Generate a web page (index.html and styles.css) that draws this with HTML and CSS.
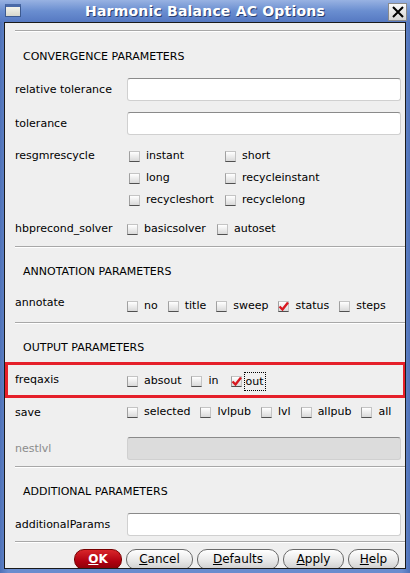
FILE: index.html
```html
<!DOCTYPE html>
<html>
<head>
<meta charset="utf-8">
<link rel="stylesheet" href="styles.css">
</head>
<body>
<div class="window">
  <div class="titlebar">
    <span class="winicon"></span>
    <span class="title">Harmonic Balance AC Options</span>
    <span class="closebtn">
      <svg width="14" height="14" viewBox="0 0 14 14"><path d="M2 2 L12 12 M12 2 L2 12" stroke="#000" stroke-width="2" fill="none"/></svg>
    </span>
  </div>
  <div class="content">
    <div class="sep s1"></div>
    <div class="heading h-first">CONVERGENCE PARAMETERS</div>

    <div class="row r-input m11a">
      <div class="label">relative tolerance</div>
      <div class="input"></div>
    </div>
    <div class="row r-input m11">
      <div class="label">tolerance</div>
      <div class="input"></div>
    </div>
    <div class="row m10">
      <div class="label lh22">resgmrescycle</div>
      <div class="grid2">
        <label class="cb"><span class="box"></span>instant</label>
        <label class="cb"><span class="box"></span>short</label>
        <label class="cb"><span class="box"></span>long</label>
        <label class="cb"><span class="box"></span>recycleinstant</label>
        <label class="cb"><span class="box"></span>recycleshort</label>
        <label class="cb"><span class="box"></span>recyclelong</label>
      </div>
    </div>
    <div class="row m7">
      <div class="label lh22">hbprecond_solver</div>
      <div class="grid2b">
        <label class="cb"><span class="box"></span>basicsolver</label>
        <label class="cb"><span class="box"></span>autoset</label>
      </div>
    </div>

    <div class="sep m6"></div>
    <div class="heading">ANNOTATION PARAMETERS</div>
    <div class="row r-annot">
      <div class="label lh20">annotate</div>
      <div class="checks pt3">
        <label class="cb"><span class="box"></span>no</label>
        <label class="cb"><span class="box"></span>title</label>
        <label class="cb"><span class="box"></span>sweep</label>
        <label class="cb"><span class="box checked"><svg width="11" height="11" viewBox="0 0 11 11"><path d="M1.5 5.5 L4.5 8.5 L10 1.5" stroke="#d81820" stroke-width="2.4" fill="none"/></svg></span>status</label>
        <label class="cb"><span class="box"></span>steps</label>
      </div>
    </div>

    <div class="sep m7"></div>
    <div class="heading">OUTPUT PARAMETERS</div>
    <div class="highlight">
      <div class="row hl-row">
        <div class="label lh20 hl-label">freqaxis</div>
        <div class="checks pt2">
          <label class="cb"><span class="box"></span>absout</label>
          <label class="cb"><span class="box"></span>in</label>
          <label class="cb cb-out"><span class="box checked"><svg width="11" height="11" viewBox="0 0 11 11"><path d="M1.5 5.5 L4.5 8.5 L10 1.5" stroke="#d81820" stroke-width="2.4" fill="none"/></svg></span><span class="focus">out</span></label>
        </div>
      </div>
    </div>
    <div class="row m4">
      <div class="label lh22">save</div>
      <div class="checks lh22">
        <label class="cb"><span class="box"></span>selected</label>
        <label class="cb"><span class="box"></span>lvlpub</label>
        <label class="cb"><span class="box"></span>lvl</label>
        <label class="cb"><span class="box"></span>allpub</label>
        <label class="cb"><span class="box"></span>all</label>
      </div>
    </div>
    <div class="row r-input m13">
      <div class="label disabled">nestlvl</div>
      <div class="input dis"></div>
    </div>

    <div class="sep m6"></div>
    <div class="heading">ADDITIONAL PARAMETERS</div>
    <div class="row r-input m11a">
      <div class="label">additionalParams</div>
      <div class="input"></div>
    </div>

    <div class="sep m5"></div>
    <div class="buttons">
      <span class="btn ok"><u>O</u>K</span>
      <span class="btn cancel"><u>C</u>ancel</span>
      <span class="btn defaults"><u>D</u>efaults</span>
      <span class="btn apply"><u>A</u>pply</span>
      <span class="btn help"><u>H</u>elp</span>
    </div>
  </div>
</div>
</body>
</html>
```

FILE: styles.css
```css
* { box-sizing: border-box; }
html, body { margin: 0; padding: 0; }
body {
  width: 410px;
  height: 573px;
  overflow: hidden;
  font-family: "DejaVu Sans", sans-serif;
  font-size: 11px;
  color: #000;
}
.window {
  width: 410px;
  height: 573px;
  background: linear-gradient(90deg, #4f72b8, #6a8cce 2%, #6a8cce 98%, #4f72b8);
  padding: 0 4px 4px 4px;
  display: flex;
  flex-direction: column;
}
.titlebar {
  height: 22px;
  margin: 0 -4px;
  background: linear-gradient(#98b2e2, #6a8ed0 50%, #5679c2);
  position: relative;
  display: flex;
  align-items: center;
  justify-content: center;
  flex: none;
}
.title {
  color: #fff;
  font-weight: bold;
  font-size: 14px;
  letter-spacing: 0.2px;
  text-shadow: 1px 1px 0 #2a3f70;
}
.winicon {
  position: absolute;
  left: 5px;
  top: 4px;
  width: 16px;
  height: 13px;
  border: 1px solid #3d5a90;
  border-top: 3px solid #4a6aa8;
  background: linear-gradient(#f4f4ec, #d8d8cc);
}
.closebtn {
  position: absolute;
  right: 3px;
  top: 3px;
  width: 19px;
  height: 18px;
  background: linear-gradient(#fafafa, #d4d4d4);
  border: 1px solid #8a8a8a;
  display: flex;
  align-items: center;
  justify-content: center;
}
.content {
  flex: 1;
  background: #efefef;
  border: 1px solid #1a1a1a;
  display: flex;
  flex-direction: column;
  overflow: hidden;
}
.sep {
  height: 2px;
  margin-left: 10px;
  border-top: 1px solid #a8a8a8;
  border-bottom: 1px solid #ffffff;
  flex: none;
}
.s1 { margin-top: 7px; }
.m4 { margin-top: 4px; }
.m5 { margin-top: 5px; }
.m6 { margin-top: 6px; }
.m7 { margin-top: 7px; }
.m10 { margin-top: 10px; }
.m11 { margin-top: 11px; }
.m11a { margin-top: 11px; }
.m13 { margin-top: 13px; }
.heading {
  margin-top: 14px;
  height: 20px;
  line-height: 20px;
  padding-left: 18px;
  flex: none;
}
.h-first { margin-top: 15px; }
.row {
  display: grid;
  grid-template-columns: 112px 1fr;
  padding-left: 10px;
  padding-right: 4px;
  align-items: start;
  flex: none;
}
.r-input {
  align-items: center;
  height: 23px;
}
.label { white-space: nowrap; }
.lh22 { line-height: 22px; }
.lh20 { line-height: 20px; }
.disabled { color: #8c8c8c; }
.input {
  height: 23px;
  background: #fff;
  border: 1px solid #d0d0d0;
  border-top-color: #8a8a8a;
  border-radius: 3px;
}
.input.dis { background: #dcdcdc; }
.grid2 {
  display: grid;
  grid-template-columns: 96px auto;
  padding-left: 2px;
}
.grid2b {
  display: grid;
  grid-template-columns: 90px auto;
}
.grid2 .cb, .grid2b .cb { line-height: 22px; height: 22px; }
.checks {
  display: flex;
  gap: 10px;
  line-height: 20px;
}
.pt3 { padding-top: 3px; }
.pt2 { padding-top: 1px; }
.r-annot { margin-top: 11px; height: 22px; }
.cb {
  display: flex;
  align-items: center;
  gap: 6px;
  white-space: nowrap;
}
.box {
  width: 11px;
  height: 11px;
  flex: none;
  background: linear-gradient(#ffffff, #d9d9d9);
  border: 1px solid #c4c4c4;
  border-bottom: 1px solid #505050;
  border-left-color: #a0a0a0;
  display: flex;
  align-items: center;
  justify-content: center;
}
.box svg { display: block; margin: -1px; }
.highlight {
  margin-top: 4px;
  height: 36px;
  margin-right: -1px;
  border: 3px solid #e5202a;
  flex: none;
}
.hl-row { padding-left: 7px; height: 30px; padding-top: 5px; }
.cb-out { margin-left: 2px; gap: 2px; }
.focus {
  border: 1px dotted #000;
  padding: 0 1px;
  line-height: 17px;
}
.buttons {
  margin-top: 6px;
  display: flex;
  justify-content: flex-end;
  gap: 4px;
  padding-right: 6px;
  flex: none;
}
.btn {
  height: 21px;
  line-height: 19px;
  border: 1px solid #6a6a6a;
  border-radius: 10px;
  background: linear-gradient(#ffffff, #e6e6e6 60%, #cfcfcf);
  text-align: center;
  font-size: 12px;
}
.btn u { text-decoration: underline; }
.ok {
  width: 48px;
  background: linear-gradient(#d8262a, #b00010 60%, #8a0008);
  color: #fff;
  font-weight: bold;
  border-color: #700;
}
.cancel { width: 67px; }
.defaults { width: 82px; }
.apply { width: 61px; }
.help { width: 51px; }
```
